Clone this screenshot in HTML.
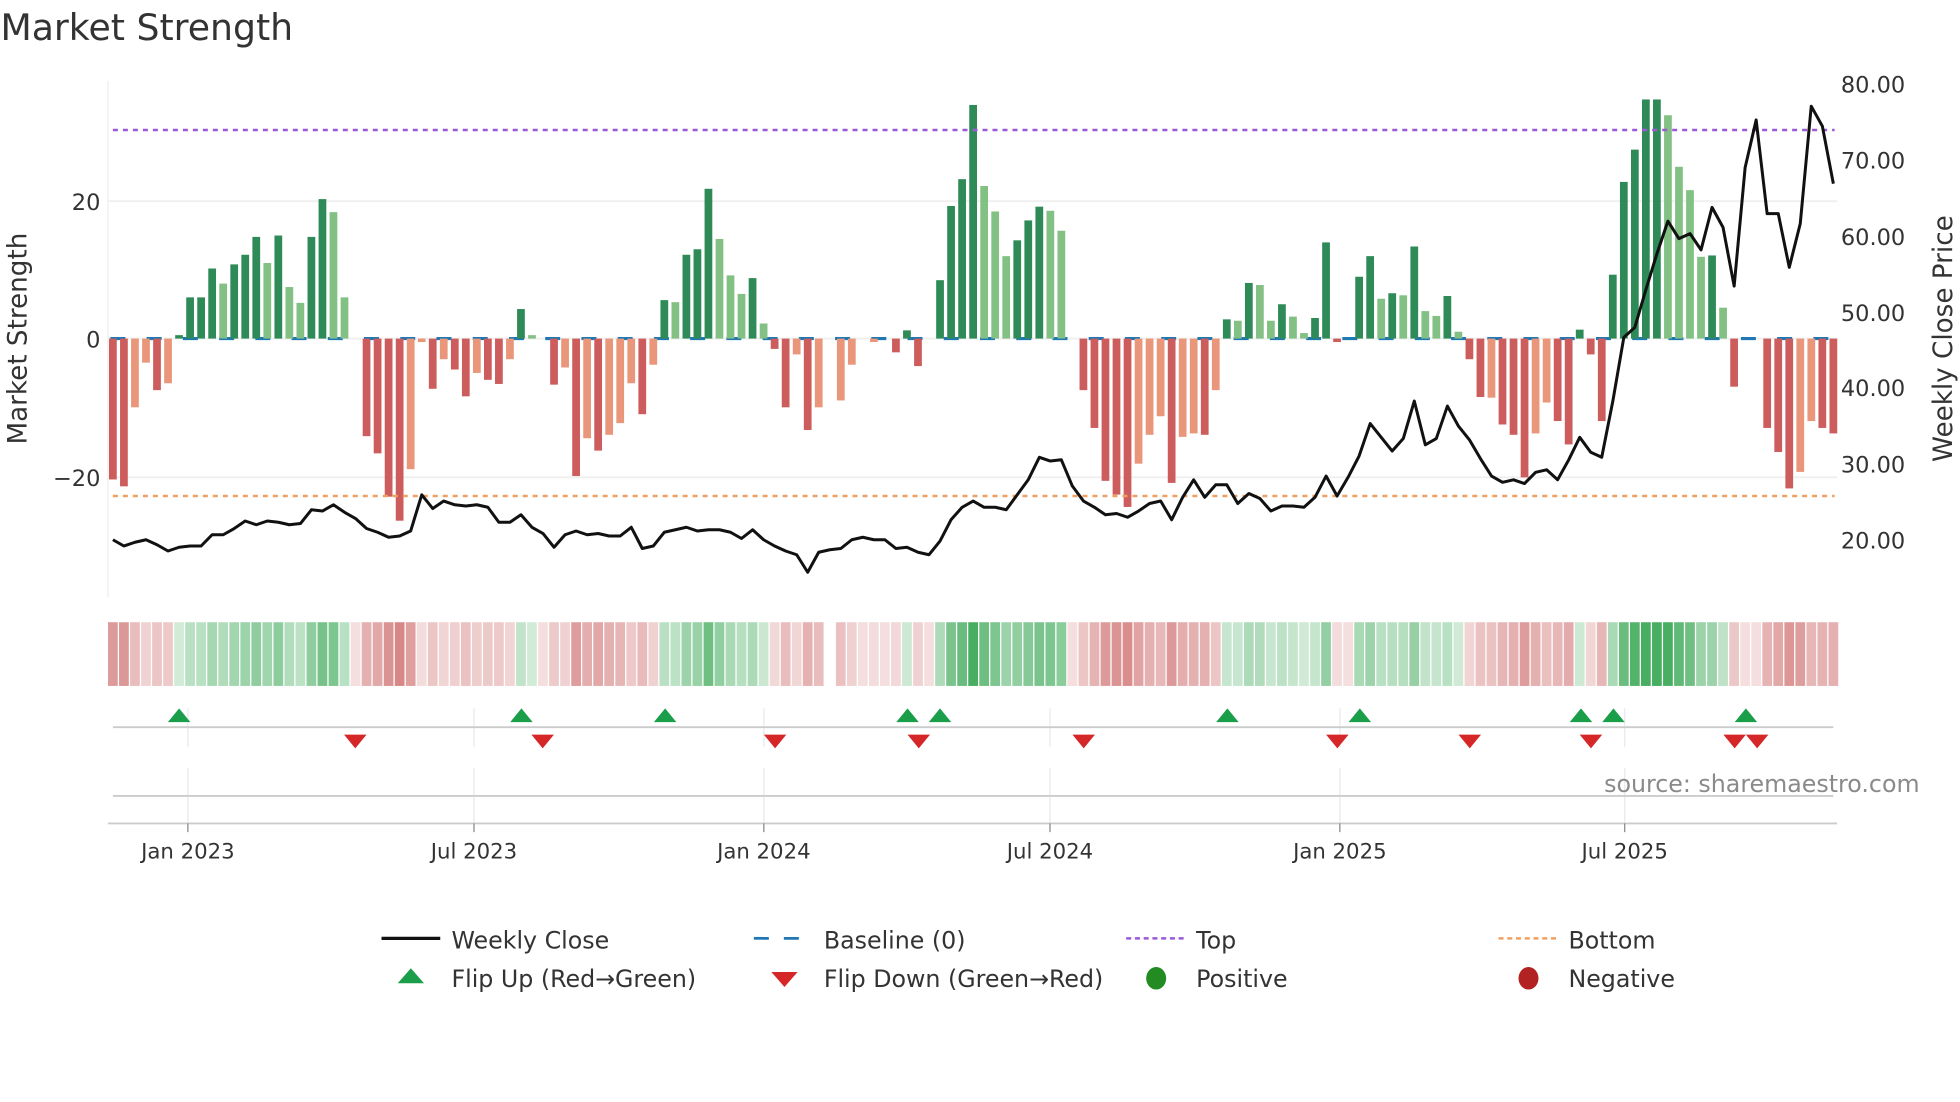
<!DOCTYPE html>
<html><head><meta charset="utf-8">
<style>
html,body{margin:0;padding:0;background:#fff;}
svg{display:block;font-family:"DejaVu Sans","Liberation Sans",sans-serif;}
</style></head>
<body>
<svg id="c" width="1960" height="1102" viewBox="0 0 1568 882" xmlns="http://www.w3.org/2000/svg">
<rect width="1568" height="882" fill="#fff"/>
<text x="0" y="32" font-size="29" fill="#333">Market Strength</text>
<line x1="86" y1="65" x2="86" y2="478" stroke="#eee" stroke-width="1"/>
<line x1="86" y1="161" x2="1470" y2="161" stroke="#efefef" stroke-width="1.5"/>
<line x1="86" y1="271" x2="1470" y2="271" stroke="#efefef" stroke-width="1.5"/>
<line x1="86" y1="382" x2="1470" y2="382" stroke="#efefef" stroke-width="1.5"/>
<g font-size="18" fill="#333" text-anchor="end">
<text x="80" y="168">20</text><text x="80" y="278">0</text><text x="80" y="389">−20</text>
</g>
<g font-size="18" fill="#333">
<text x="1473" y="74">80.00</text><text x="1473" y="135">70.00</text><text x="1473" y="196">60.00</text>
<text x="1473" y="257">50.00</text><text x="1473" y="317">40.00</text><text x="1473" y="378">30.00</text>
<text x="1473" y="439">20.00</text>
</g>
<text transform="translate(21,271) rotate(-90)" font-size="21" fill="#333" text-anchor="middle">Market Strength</text>
<text transform="translate(1562,271) rotate(-90)" font-size="21" fill="#333" text-anchor="middle">Weekly Close Price</text>
<line x1="88" y1="271" x2="1468" y2="271" stroke="#1f77b4" stroke-width="2.5" stroke-dasharray="12,17"/>
<g id="bars"></g>
<line x1="90" y1="104" x2="1468" y2="104" stroke="#9b59d6" stroke-width="2" stroke-dasharray="4,4"/>
<line x1="90" y1="397" x2="1468" y2="397" stroke="#f0a060" stroke-width="2" stroke-dasharray="4,4"/>
<polyline id="price" fill="none" stroke="#111" stroke-width="2.4" stroke-linejoin="round"/>
<g id="heat"></g>
<g stroke="#e8e8ee" stroke-width="1">
<line x1="150" y1="567" x2="150" y2="598"/><line x1="379" y1="567" x2="379" y2="598"/><line x1="611" y1="567" x2="611" y2="598"/><line x1="840" y1="567" x2="840" y2="598"/><line x1="1072" y1="567" x2="1072" y2="598"/><line x1="1300" y1="567" x2="1300" y2="598"/>
<line x1="150" y1="615" x2="150" y2="658"/><line x1="379" y1="615" x2="379" y2="658"/><line x1="611" y1="615" x2="611" y2="658"/><line x1="840" y1="615" x2="840" y2="658"/><line x1="1072" y1="615" x2="1072" y2="658"/><line x1="1300" y1="615" x2="1300" y2="658"/>
</g>
<line x1="90" y1="582" x2="1467" y2="582" stroke="#ccc" stroke-width="1.5"/>
<line x1="90" y1="637" x2="1467" y2="637" stroke="#ccc" stroke-width="1.5"/>
<line x1="86" y1="659" x2="1470" y2="659" stroke="#ccc" stroke-width="1.5"/>
<g id="flips"></g>
<g stroke="#888" stroke-width="1">
<line x1="150" y1="659" x2="150" y2="666"/><line x1="379" y1="659" x2="379" y2="666"/><line x1="611" y1="659" x2="611" y2="666"/><line x1="840" y1="659" x2="840" y2="666"/><line x1="1072" y1="659" x2="1072" y2="666"/><line x1="1300" y1="659" x2="1300" y2="666"/>
</g>
<g font-size="17" fill="#333" text-anchor="middle">
<text x="150" y="687">Jan 2023</text><text x="379" y="687">Jul 2023</text><text x="611" y="687">Jan 2024</text>
<text x="840" y="687">Jul 2024</text><text x="1072" y="687">Jan 2025</text><text x="1300" y="687">Jul 2025</text>
</g>
<text x="1536" y="634" font-size="19" fill="#8a8a8a" text-anchor="end">source: sharemaestro.com</text>
<g font-size="19" fill="#333">
<line x1="305" y1="751" x2="352" y2="751" stroke="#111" stroke-width="2.6"/>
<text x="361" y="759">Weekly Close</text>
<line x1="603" y1="751" x2="650" y2="751" stroke="#1f77b4" stroke-width="2.2" stroke-dasharray="12,12"/>
<text x="659" y="759">Baseline (0)</text>
<line x1="901" y1="751" x2="948" y2="751" stroke="#9b59d6" stroke-width="2" stroke-dasharray="4,3"/>
<text x="957" y="759">Top</text>
<line x1="1199" y1="751" x2="1246" y2="751" stroke="#f0a060" stroke-width="2" stroke-dasharray="4,3"/>
<text x="1255" y="759">Bottom</text>
<polygon points="318,787 339,787 328.5,775" fill="#1a9e4a"/>
<text x="361" y="790">Flip Up (Red→Green)</text>
<polygon points="617,778 638,778 627.5,790" fill="#d62728"/>
<text x="659" y="790">Flip Down (Green→Red)</text>
<ellipse cx="925" cy="783" rx="8" ry="9" fill="#228b22"/>
<text x="957" y="790">Positive</text>
<ellipse cx="1223" cy="783" rx="8" ry="9" fill="#b22222"/>
<text x="1255" y="790">Negative</text>
</g>
</svg>
<script>
var B=[[-20.5,'r'],[-21.5,'r'],[-10,'s'],[-3.5,'s'],[-7.5,'r'],[-6.5,'s'],[0.5,'g'],[6,'g'],[6,'g'],[10.2,'g'],[8,'l'],[10.8,'g'],[12.2,'g'],[14.8,'g'],[11,'l'],[15,'g'],[7.5,'l'],[5.2,'l'],[14.8,'g'],[20.3,'g'],[18.4,'l'],[6,'l'],[0,'r'],[-14.2,'r'],[-16.7,'r'],[-23,'r'],[-26.5,'r'],[-19,'s'],[-0.5,'s'],[-7.3,'r'],[-3,'s'],[-4.5,'r'],[-8.4,'r'],[-5,'s'],[-6,'r'],[-6.6,'r'],[-3,'s'],[4.3,'g'],[0.5,'l'],[0,'r'],[-6.7,'r'],[-4.2,'s'],[-20,'r'],[-14.5,'s'],[-16.3,'r'],[-14,'s'],[-12.3,'s'],[-6.5,'s'],[-11,'r'],[-3.8,'s'],[5.6,'g'],[5.3,'l'],[12.2,'g'],[13,'g'],[21.8,'g'],[14.5,'l'],[9.2,'l'],[6.5,'l'],[8.8,'g'],[2.2,'l'],[-1.5,'r'],[-10,'r'],[-2.3,'s'],[-13.3,'r'],[-10,'s'],[0,'x'],[-9,'s'],[-3.8,'s'],[0,'r'],[-0.5,'s'],[0,'r'],[-2,'r'],[1.2,'g'],[-4,'r'],[0,'r'],[8.5,'g'],[19.3,'g'],[23.2,'g'],[34,'g'],[22.2,'l'],[18.5,'l'],[12,'l'],[14.3,'g'],[17.2,'g'],[19.2,'g'],[18.6,'l'],[15.7,'l'],[0,'r'],[-7.5,'r'],[-13,'r'],[-20.7,'r'],[-22.7,'r'],[-24.5,'r'],[-18.2,'s'],[-14,'s'],[-11.3,'s'],[-21,'r'],[-14.3,'s'],[-13.8,'s'],[-14,'r'],[-7.5,'s'],[2.8,'g'],[2.6,'l'],[8.1,'g'],[7.8,'l'],[2.6,'l'],[5,'g'],[3.2,'l'],[0.8,'l'],[3,'g'],[14,'g'],[-0.5,'r'],[0,'r'],[9,'g'],[12,'g'],[5.8,'l'],[6.6,'g'],[6.3,'l'],[13.4,'g'],[4,'l'],[3.3,'l'],[6.2,'g'],[1,'l'],[-3,'r'],[-8.5,'r'],[-8.6,'s'],[-12.5,'r'],[-14,'r'],[-20.2,'r'],[-13.8,'s'],[-9.3,'s'],[-12,'r'],[-15.4,'r'],[1.3,'g'],[-2.3,'r'],[-12,'r'],[9.3,'g'],[22.8,'g'],[27.5,'g'],[34.8,'g'],[34.8,'g'],[32.5,'l'],[25,'l'],[21.6,'l'],[11.9,'l'],[12.1,'g'],[4.5,'l'],[-7,'r'],[0,'r'],[0,'r'],[-13,'r'],[-16.5,'r'],[-21.8,'r'],[-19.4,'s'],[-12,'s'],[-13,'r'],[-13.8,'r']];
var C={g:'#2e8b57',l:'#82c083',r:'#cd5c5c',s:'#e9967a',x:'#fff'};
var N=B.length, step=(1467-90)/(N-1), ns='http://www.w3.org/2000/svg';
function el(t,a,p){var e=document.createElementNS(ns,t);for(var k in a)e.setAttribute(k,a[k]);document.getElementById(p).appendChild(e);}
for(var i=0;i<N;i++){var x=90+i*step,v=B[i][0],h=Math.abs(v)*5.5;
 if(h>0.3)el('rect',{x:x-3.1,y:v>0?271-h:271,width:6.2,height:h,fill:C[B[i][1]]},'bars');
 if(B[i][1]=='x')continue;
 var a=Math.min(Math.abs(v)/30,1),col;
 if(v>0){col='rgba(40,160,70,'+(0.2+0.65*a).toFixed(2)+')';}else{col='rgba(200,90,90,'+(0.2+0.6*a).toFixed(2)+')';}
 el('rect',{x:x-3.9,y:498,width:7.8,height:51,fill:col},'heat');}
var P=[432,437,434,432,436,441,438,437,437,428,428,423,417,420,417,418,420,419,408,409,404,410,415,423,426,430,429,425,396,407,401,404,405,404,406,418,418,412,422,427,438,428,425,428,427,429,429,422,439,437,426,424,422,425,424,424,426,431,424,432,437,441,444,458,442,440,439,432,430,432,432,439,438,442,444,433,416,406,401,406,406,408,396,384,366,369,368,389,401,406,412,411,414,409,403,401,416,398,384,398,388,388,403,395,399,409,405,405,406,398,381,397,382,365,339,350,361,351,321,356,351,325,341,352,367,381,386,384,387,378,376,384,368,350,362,366,321,270,262,232,203,177,191,187,200,166,182,229,134,96,171,171,214,179,85,101,147];
var pts=[];for(var j=0;j<P.length;j++)pts.push((90+j*(1467-90)/(P.length-1)).toFixed(1)+','+P[j]);
document.getElementById('price').setAttribute('points',pts.join(' '));
[143,417,532,726,752,982,1088,1265,1291,1397].forEach(function(x){el('polygon',{points:(x-9)+',578 '+(x+9)+',578 '+x+',567',fill:'#1a9e4a'},'flips');});
[284,434,620,735,867,1070,1176,1273,1388,1406].forEach(function(x){el('polygon',{points:(x-9)+',588 '+(x+9)+',588 '+x+',599',fill:'#d62728'},'flips');});
</script>
</body></html>
